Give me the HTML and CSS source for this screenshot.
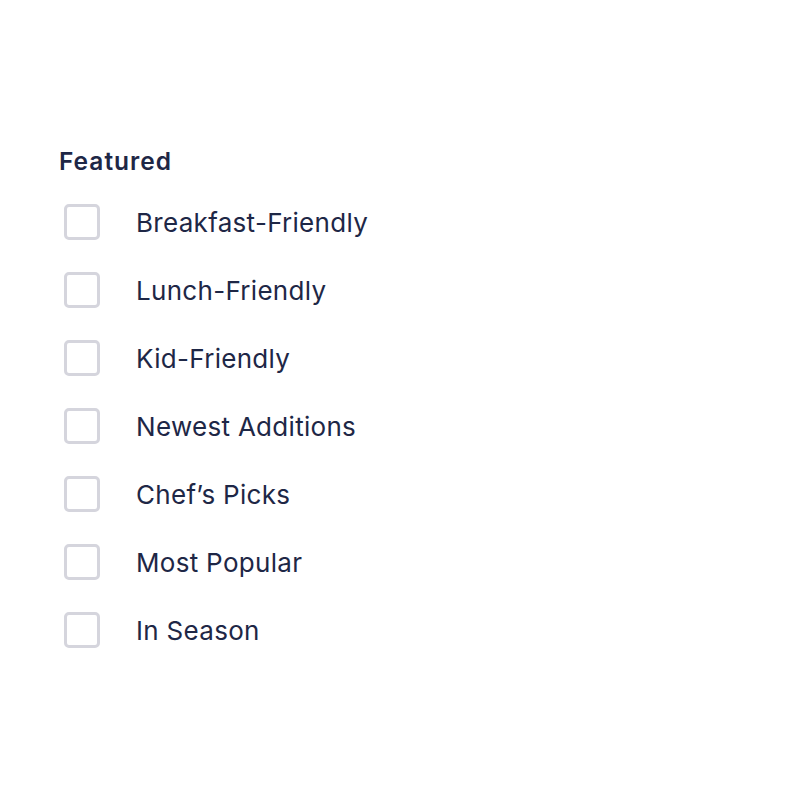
FILE: index.html
```html
<!DOCTYPE html>
<html>
<head>
<meta charset="utf-8">
<link rel="stylesheet" href="styles.css">
</head>
<body>
<div class="panel">
  <h2 class="title">Featured</h2>
  <ul class="list">
    <li class="item"><span class="box"></span><span class="label">Breakfast-Friendly</span></li>
    <li class="item"><span class="box"></span><span class="label">Lunch-Friendly</span></li>
    <li class="item"><span class="box"></span><span class="label">Kid-Friendly</span></li>
    <li class="item"><span class="box"></span><span class="label">Newest Additions</span></li>
    <li class="item"><span class="box"></span><span class="label">Chef’s Picks</span></li>
    <li class="item"><span class="box"></span><span class="label">Most Popular</span></li>
    <li class="item"><span class="box"></span><span class="label">In Season</span></li>
  </ul>
</div>
</body>
</html>
```
FILE: styles.css
```css
html, body {
  margin: 0;
  padding: 0;
  background: #ffffff;
}
body {
  font-family: Inter, "Noto Sans", sans-serif;
  color: #1e2746;
}
.panel {
  padding: 144px 0 0 59px;
}
.title {
  margin: 0;
  font-size: 24.5px;
  font-weight: 600;
  letter-spacing: 1px;
  line-height: 34px;
  color: #1e2746;
}
.list {
  list-style: none;
  margin: 26px 0 0 0;
  padding: 0;
  display: flex;
  flex-direction: column;
  gap: 32px;
}
.item {
  display: flex;
  align-items: center;
  gap: 36px;
  height: 36px;
}
.box {
  box-sizing: border-box;
  width: 36px;
  height: 36px;
  margin-left: 5px;
  border: 3px solid #d5d5dd;
  border-radius: 5px;
  flex: none;
}
.label {
  font-size: 26px;
  font-weight: 400;
  letter-spacing: 0.3px;
  line-height: 38px;
  padding-top: 2px;
  color: #1e2746;
}
```
